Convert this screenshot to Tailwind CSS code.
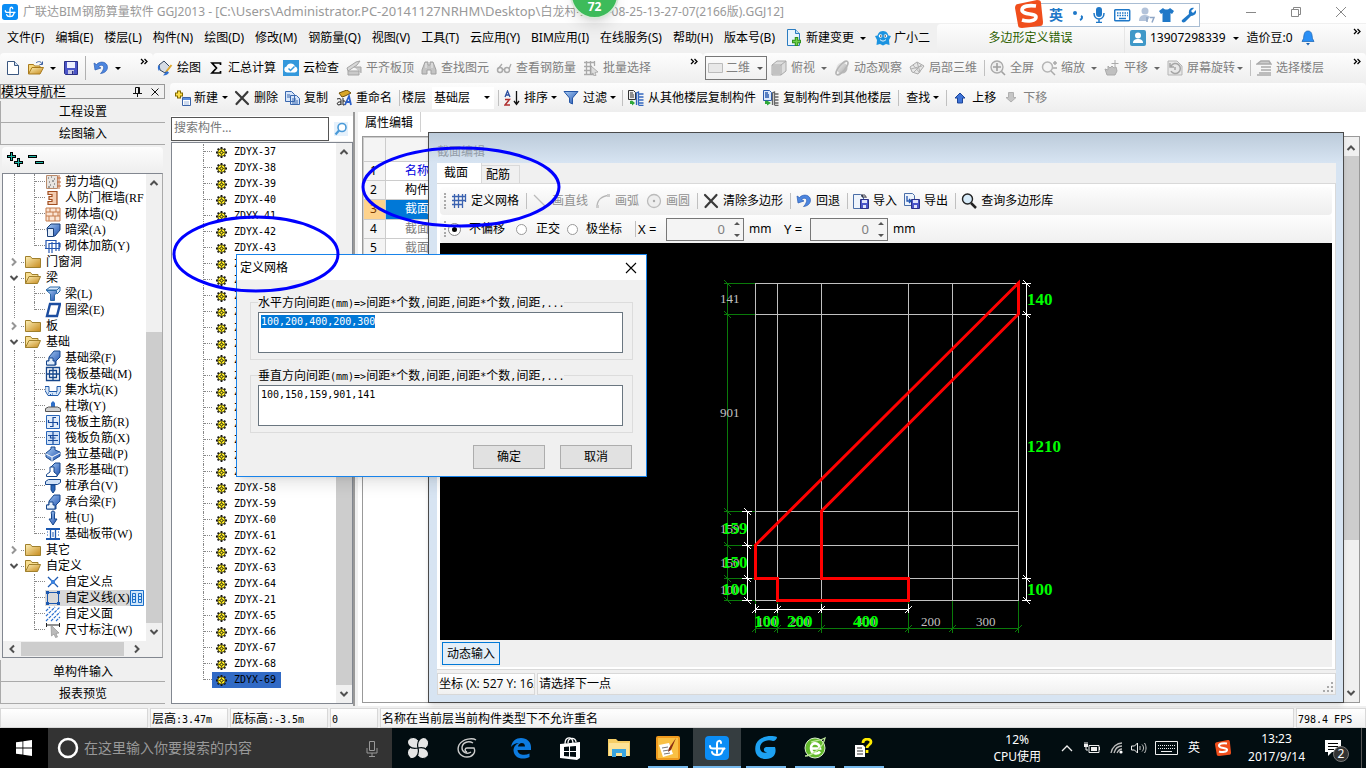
<!DOCTYPE html>
<html lang="zh-CN">
<head>
<meta charset="utf-8">
<title>广联达BIM钢筋算量软件 GGJ2013</title>
<script src="https://cdn.jsdelivr.net/npm/@tailwindcss/browser@4"></script>
</head>
<body class="relative flex h-screen flex-col overflow-hidden bg-[#f0f0f0] font-['Noto_Sans','Noto_Sans_CJK_SC',sans-serif] text-xs leading-4 whitespace-nowrap text-black">

<svg class="absolute size-0" aria-hidden="true">
  <defs>
    <linearGradient id="gy" x1="0" y1="0" x2="1" y2="1"><stop offset="0" stop-color="#fdf0b8"/><stop offset="1" stop-color="#c68a1c"/></linearGradient>
    <linearGradient id="gb" x1="0" y1="0" x2="1" y2="1"><stop offset="0" stop-color="#a9cdf5"/><stop offset="1" stop-color="#1d4fae"/></linearGradient>
    <linearGradient id="gg" x1="0" y1="0" x2="1" y2="1"><stop offset="0" stop-color="#f2f2f2"/><stop offset="1" stop-color="#a8a8a8"/></linearGradient>
  </defs>
  <symbol id="logo" viewBox="0 0 24 24"><rect width="24" height="24" rx="4" fill="#0b8df5"/><path d="M12 17V8c0-4 4-4 4-1M5 10c0 2 1 2.500 3 2.500h11M7 16c1 4 9 4 10 0 .5-2 1-3 2.500-3.500" fill="none" stroke="#fff" stroke-width="2" stroke-linecap="round"/></symbol>
  <symbol id="new" viewBox="0 0 16 16"><path d="M2.500 1.500h7l4 4v9h-11z" fill="#fff" stroke="#3b5780"/><path d="M9.500 1.500v4h4" fill="#cfe0f5" stroke="#3b5780"/></symbol>
  <symbol id="open" viewBox="0 0 16 16"><path d="M.5 14V4.500h5l1 1.500H12V8" fill="#f5d77f" stroke="#a97a1c"/><path d="M.5 14 4 7.500h11.500L12 14z" fill="url(#gy)" stroke="#a97a1c"/><path d="M8 3c2-2 5-2 6 1M14.500 1.500V4.500h-3" fill="none" stroke="#3b5fa0"/></symbol>
  <symbol id="save" viewBox="0 0 16 16"><path d="M1.500 1.500h13v13h-12l-1-1z" fill="#4b55c8" stroke="#2a2f86"/><path d="M4 2h8v6H4z" fill="#eef0ff"/><path d="M5 10h6v4H5z" fill="#c9cbe6"/><path d="M9 11h1.500v3H9z" fill="#2a2f86"/></symbol>
  <symbol id="undo" viewBox="0 0 16 16"><path d="M1 3l1 7 6-2-2.500-1.500C9 3.500 12 6 10 10c-.5 1.500-1.500 2.500-2.500 3.500C13 13 15.500 9 14 5 12 1.500 7 1 3.500 4.500z" fill="#4c86e0" stroke="#2b5cb0" stroke-width=".7"/></symbol>
  <symbol id="paint" viewBox="0 0 16 16"><path d="M2 5l5-4 6 6-5 6-5-3z" fill="#d5dbe4" stroke="#33455f"/><path d="M2 5c-2 1-1 5 0 6 1-2 1-3 1-4" fill="#2f6fd0"/><path d="M14.500 5L9 12" stroke="#e0a92e" stroke-width="2"/><path d="M10 11l-4 4.500c3 0 5-1 6-3z" fill="#2f6fd0"/></symbol>
  <symbol id="sigma" viewBox="0 0 16 16"><path d="M12.500 5V3H4l4.500 5L4 13h8.500v-2" fill="none" stroke="#000" stroke-width="1.700"/></symbol>
  <symbol id="cloud" viewBox="0 0 16 16"><path d="M0 0h16v16H0z" fill="#3398dc"/><path d="M4 12.500a3 3 0 0 1-.5-5.900 4.500 4.500 0 0 1 8.500 0A3 3 0 0 1 12 12.500z" fill="#fff"/><path d="M5.500 8.500l2 2 4-4" stroke="#3398dc" stroke-width="1.500" fill="none"/></symbol>
  <symbol id="slab" viewBox="0 0 16 16"><path d="M1 8l9-6 4-1-3 4-9 6z" fill="#d8d8d8" stroke="#a5a5a5"/><path d="M2 11h11v4H2zM8 7h7v6" fill="#c9c9c9" stroke="#a5a5a5"/></symbol>
  <symbol id="bino" viewBox="0 0 16 16"><path d="M4 2h3v3h2V2h3l3 8v4h-5v-4H6v4H1v-4z" fill="#c4c4c4" stroke="#a0a0a0"/><path d="M5 3v5M11 3v5" stroke="#eee"/></symbol>
  <symbol id="glasses" viewBox="0 0 16 16"><circle cx="4" cy="10" r="2.500" fill="none" stroke="#aaa" stroke-width="1.500"/><circle cx="11" cy="10" r="2.500" fill="none" stroke="#aaa" stroke-width="1.500"/><path d="M2 9l4-5M13 9l2-5M6.500 9.500h2" stroke="#aaa" stroke-width="1.300"/></symbol>
  <symbol id="batch" viewBox="0 0 16 16"><path d="M1 2.500h11M1 6.500h8M1 10.500h7M1 14.500h9M3.500 1v14M7.500 1v14M11.500 1v5" stroke="#aaa" stroke-width="1.300"/><path d="M8 6l7 6-3 .5 1 3-2 .5-1-3-2 1.500z" fill="#ddd" stroke="#999" stroke-width=".7"/></symbol>
  <symbol id="cube" viewBox="0 0 16 16"><path d="M1 5l5-4h9v10l-5 4H1z" fill="#ddd" stroke="#aaa"/><path d="M1 5h9v10M10 5l5-4" fill="none" stroke="#aaa"/><path d="M2 6h7v8H2z" fill="#c2c2c2"/></symbol>
  <symbol id="orbit" viewBox="0 0 16 16"><circle cx="8" cy="8" r="5.500" fill="url(#gg)"/><ellipse cx="8" cy="8" rx="8.500" ry="3" transform="rotate(-50 8 8)" fill="none" stroke="#b5b5b5" stroke-width="1.500"/></symbol>
  <symbol id="part3d" viewBox="0 0 16 16"><path d="M1 7l7-5 7 4-6 8-6-2z" fill="#e6e6e6" stroke="#aaa"/><path d="M4 5l7 8M8 2l3 10M2 9l11-3M5 12l8-8" stroke="#b0b0b0"/></symbol>
  <symbol id="full" viewBox="0 0 16 16"><circle cx="7" cy="7" r="6" fill="#eee" stroke="#aaa" stroke-width="1.300"/><path d="M3 7h8M7 3v8M11.500 11.500L15 15" stroke="#a0a0a0" stroke-width="1.600"/></symbol>
  <symbol id="zoomi" viewBox="0 0 16 16"><circle cx="6.500" cy="7" r="5" fill="#f5f5f5" stroke="#b5b5b5" stroke-width="1.500"/><path d="M10 11l4 4M12 3h4M14 1v4M12 8h4" stroke="#aaa" stroke-width="1.500"/></symbol>
  <symbol id="pan" viewBox="0 0 16 16"><path d="M3 15l-2-6 3 1V6l2 2 2-2 2 2 2-1 1 4-2 4z" fill="#c0c0c0" stroke="#aaa"/><path d="M11 0v7M7.500 3.500h7" stroke="#aaa"/></symbol>
  <symbol id="rotate" viewBox="0 0 16 16"><path d="M1 1h9l5 5v9H1z" fill="#e8e8e8" stroke="#b5b5b5"/><path d="M4 6a5 5 0 1 1 0 5M3 3v4h4M8 7v3" fill="none" stroke="#a5a5a5" stroke-width="1.500"/></symbol>
  <symbol id="floors" viewBox="0 0 16 16"><path d="M1 4l4-3h8l2 3zM5 7h10M5 10h10M3 13h12M1 15h14" fill="#ccc" stroke="#aaa" stroke-width="1.500"/></symbol>
  <symbol id="create" viewBox="0 0 16 16"><path d="M4 .5v8M0 4.500h8" stroke="#806800" stroke-width="4"/><path d="M4 1.500v6M1 4.500h6" stroke="#ffe04a" stroke-width="2"/><path d="M7.500 7.500h8v8h-8z" fill="#fff" stroke="#3c64a8"/><path d="M8 8h7v2H8z" fill="#5b8fe0"/><path d="M9 12h5M9 14h5" stroke="#9db6dd"/></symbol>
  <symbol id="del" viewBox="0 0 16 16"><path d="M2 2l12 12M13.500 2L2.500 14" stroke="#3a3a3a" stroke-width="2.200" stroke-linecap="round"/></symbol>
  <symbol id="copy" viewBox="0 0 16 16"><path d="M1.500 1.500h6l3 3v7h-9zM6.500 5.500h6l3 3v6h-9z" fill="#d6e5fa" stroke="#3a68ae"/><path d="M3 5h3M3 7h3M8 9h4M8 11h6M8 13h6" stroke="#3a68ae"/></symbol>
  <symbol id="rename" viewBox="0 0 16 16"><path d="M3 3l8-3 4 3-6 3-3 1z" fill="#d9a628" stroke="#705008"/><path d="M1 9c3-1 4 0 4 1v5M5 12c-4-1-5 3-2 3l2-1M7 8v7c4 0 3-5 0-4" fill="none" stroke="#222"/><path d="M9 15l4-9 2 9M10.500 12h4" fill="none" stroke="#2c60c8" stroke-width="1.800"/></symbol>
  <symbol id="sort" viewBox="0 0 16 16"><path d="M1 7l2.500-6L6 7M2 5h3" fill="none" stroke="#2c4fa0" stroke-width="1.300"/><path d="M1 9.500h4.500L1 15h5" fill="none" stroke="#b03030" stroke-width="1.400"/><path d="M12.500 1v13M10 11l2.500 3.500L15 11" fill="none" stroke="#111" stroke-width="1.300"/></symbol>
  <symbol id="filter" viewBox="0 0 16 16"><path d="M1 1.500h14L9.500 8v6l-3-1.500V8z" fill="url(#gb)" stroke="#2556a5"/></symbol>
  <symbol id="cfrom" viewBox="0 0 16 16"><path d="M.5.5h5l2 2v7h-7z" fill="#eee" stroke="#333"/><path d="M2 3h3M2 5h4M2 7h4" stroke="#333"/><path d="M8.500 15V3l2-1v13M10.500 4h5M10.500 7h5M10.500 10h5M10.500 13h5M10.500 15.500h5" fill="none" stroke="#3468c0" stroke-width="1.300"/><path d="M2 11v3h2v1.500l3-2.500-3-2.500" fill="#2fa83a"/></symbol>
  <symbol id="cto" viewBox="0 0 16 16"><path d="M.5.5h6l2 2v8h-8z" fill="#dce9fb" stroke="#2c5cb0"/><path d="M2 3h3M2 5h4M2 7h4" stroke="#2c5cb0" stroke-width="1.400"/><path d="M9.500 15V3l2-1v13M11.500 4h4M11.500 7h4M11.500 10h4M11.500 13h4M11.500 15.500h4" fill="none" stroke="#666" stroke-width="1.300"/><path d="M2 11v3h2v1.500l4-2.500-4-2.500" fill="#2fa83a"/></symbol>
  <symbol id="up" viewBox="0 0 16 16"><path d="M8 3l5 5h-2.500v5h-5V8H3z" fill="#3f74d8" stroke="#1d4598"/></symbol>
  <symbol id="down" viewBox="0 0 16 16"><path d="M8 12L3 7.500h2.500v-5h5v5H13z" fill="#c5c5c5" stroke="#b0b0b0"/></symbol>
  <symbol id="docplus" viewBox="0 0 16 18"><path d="M1.500.5h8l4 4v12h-12z" fill="#e9f4fd" stroke="#2b7cc0"/><path d="M9.500.5v4h4" fill="#bfe0f7" stroke="#2b7cc0"/><path d="M10.500 8v9M6 12.500h9" stroke="#2f8f1c" stroke-width="3.500"/><path d="M10.500 9v7M7 12.500h7" stroke="#6ed04a" stroke-width="1.500"/></symbol>
  <symbol id="mascot" viewBox="0 0 16 16"><path d="M8 1c4 0 5 3 5.500 4.500L16 6l-2 4 .5 5L11 14l-3 1.500L5 14l-3.500 1 .5-5L0 6l2.500-.5C3 4 4 1 8 1z" fill="#1b93e0"/><circle cx="5.500" cy="6" r="1.800" fill="#fff"/><circle cx="10.500" cy="6" r="1.800" fill="#fff"/><circle cx="5.800" cy="6" r=".8" fill="#123"/><circle cx="10.200" cy="6" r=".8" fill="#123"/><path d="M5 9.500c2 2 4 2 6 0" stroke="#fff" fill="none"/></symbol>
  <symbol id="user" viewBox="0 0 16 16"><rect width="16" height="16" rx="2" fill="#3f98c8"/><circle cx="8" cy="5.500" r="3" fill="#fff"/><path d="M3 13c0-3 2-4 5-4s5 1 5 4z" fill="#fff"/></symbol>
  <symbol id="bell" viewBox="0 0 14 16"><path d="M7 1c4 0 4 4 4.500 7.500l1.500 3H1l1.500-3C3 5 3 1 7 1z" fill="#2a8ff5" stroke="#1660b0" stroke-width=".7"/><path d="M5 13h4l-2 2.500z" fill="#1660b0"/></symbol>
  <symbol id="chev" viewBox="0 0 8 8"><path d="M1 1l2.500 2.500L1 6M4.500 1L7 3.500 4.500 6" fill="none" stroke="#000" stroke-width="1.300"/></symbol>
  <symbol id="mag" viewBox="0 0 16 16"><path d="M1 1h14v14H1z" fill="#e6f1fb"/><circle cx="9" cy="6.500" r="4" fill="#fff" stroke="#4a9ad8" stroke-width="1.600"/><path d="M6 9.500L2.500 13.500" stroke="#4a9ad8" stroke-width="2.200"/></symbol>
  <symbol id="mag2" viewBox="0 0 16 16"><circle cx="6.500" cy="6" r="5" fill="#d6eaf8" stroke="#222" stroke-width="1.400"/><path d="M10 10l5 5" stroke="#222" stroke-width="2.500"/></symbol>
  <symbol id="gridi" viewBox="0 0 16 16"><path d="M1 3.500h14M1 7.500h14M1 11.500h11M3.500 1v14M7.500 1v14M11.500 1v14M14.500 1v8" stroke="#3a62b0" stroke-width="1.300"/></symbol>
  <symbol id="line" viewBox="0 0 16 16"><path d="M2 2l12 12" stroke="#bbb" stroke-width="1.300"/></symbol>
  <symbol id="arc" viewBox="0 0 16 16"><path d="M2 14C2 7 7 3 14 2.500" fill="none" stroke="#b5b5b5" stroke-width="1.300"/><path d="M1 12h3v3H1zM12 1h3v3h-3z" fill="#ccc"/></symbol>
  <symbol id="circ" viewBox="0 0 16 16"><circle cx="8" cy="8" r="6.500" fill="#eee" stroke="#bbb" stroke-width="1.300"/><circle cx="8" cy="8" r="1.200" fill="#aaa"/></symbol>
  <symbol id="imp" viewBox="0 0 16 16"><path d="M.5 1.500h7l3 3v11H.5z" fill="#eef4fc" stroke="#4a6ea8"/><path d="M7.500 6.500h8v9h-8z" fill="#4b55c8" stroke="#2a2f86"/><path d="M9 7h5v3H9zM10 12h3v3h-3z" fill="#e0e3fa"/><path d="M9 3c2-2 4-1 4 2M9 1v3h3" fill="none" stroke="#223"/></symbol>
  <symbol id="exp" viewBox="0 0 16 16"><path d="M.5.500h8l2 2v10H.5z" fill="#eef4fc" stroke="#4a6ea8"/><path d="M7.500 6.500h8v9h-8z" fill="#4b55c8" stroke="#2a2f86"/><path d="M9 7h5v3H9zM10 12h3v3h-3z" fill="#e0e3fa"/><path d="M3 3v5h4M5 6l2 2-2 2" fill="none" stroke="#2255b0" stroke-width="1.300"/></symbol>

  <symbol id="fc" viewBox="0 0 16 14"><path d="M.5 12.500v-11h5l1.500 2h8.500v9z" fill="url(#gy)" stroke="#a0802c"/></symbol>
  <symbol id="fo" viewBox="0 0 16 14"><path d="M.5 12.500v-11h5l1.500 2h6v2" fill="#f7dd90" stroke="#a0802c"/><path d="M.5 12.500L4 5.500h11.500l-3 7z" fill="url(#gy)" stroke="#a0802c"/></symbol>
  <symbol id="t-wall" viewBox="0 0 16 16"><path d="M1.500 1.500h11v13h-11z" fill="#e8e4e0" stroke="#b98a6a"/><path d="M3 4h1M6 3h1M9 5h1M4 8h1M7 7h2M5 11h1M9 10h1M3 13h2M8 13h1" stroke="#555"/><path d="M14 1v14M12 4h4M12 8h4M12 12h4" stroke="#c06a3a"/></symbol>
  <symbol id="t-air" viewBox="0 0 16 16"><path d="M3 1.500h9v13H3v-3h4v-2H4v-3h3v-2H3z" fill="#f3ccb0" stroke="#a14e20" stroke-width="1.200"/></symbol>
  <symbol id="t-brick" viewBox="0 0 16 16"><path d="M1 2h14v13H1z" fill="#fbe6d6" stroke="#c47a4a"/><path d="M1 6h14M1 10h14M5 2v4M11 2v4M8 6v4M13 6v4M4 10v5M10 10v5" stroke="#c47a4a"/></symbol>
  <symbol id="t-box" viewBox="0 0 16 16"><path d="M2 6l4-4h9v6l-5 6-7 0z" fill="url(#gb)" stroke="#1b3f78"/><path d="M2.500 6.500h6v8h-6z" fill="#e2edfa" stroke="#1b3f78"/></symbol>
  <symbol id="t-rebar" viewBox="0 0 16 16"><path d="M1 2.500h10v8H1zM4 5.500h11v4M4 5v10M7 4v11M11 2v11M0 10.500h15M14 4v9" fill="none" stroke="#2556b0" stroke-width="1.200"/></symbol>
  <symbol id="t-beam" viewBox="0 0 16 16"><path d="M1 4l4-3h10l-3 3zM12 4l3-3v4l-3 3" fill="#d9e9fa" stroke="#2c6aa8"/><path d="M1.500 4.500h10v3l-2 1v6h-4V8z" fill="url(#gb)" stroke="#2c6aa8"/></symbol>
  <symbol id="t-ring" viewBox="0 0 16 16"><path d="M5 2h10l-3 12H2z" fill="#fff" stroke="#1c4da0" stroke-width="2.400"/></symbol>
  <symbol id="t-found" viewBox="0 0 16 16"><path d="M1.500 15v-4H4V7l5-6h6v6l-4 4v4z" fill="url(#gb)" stroke="#17478c"/><path d="M4 8h4v3h2v4H1.500v-4H4z" fill="#e4effb" stroke="#17478c"/></symbol>
  <symbol id="t-raft" viewBox="0 0 16 16"><path d="M1.500 1.500h13v13h-13zM4.500 4.500h7v7h-7zM1 8h14M8 1v14" fill="none" stroke="#17478c" stroke-width="1.300"/></symbol>
  <symbol id="t-pit" viewBox="0 0 16 16"><path d="M0 4.500h4v5h8v-5h4v4l-3 5H3l-3-5z" fill="#d6e6f8" stroke="#2059a8"/><path d="M3 11h1M7 12h1M11 11h1M5 12.500h1" stroke="#2059a8"/></symbol>
  <symbol id="t-pier" viewBox="0 0 16 16"><path d="M6 10V5l2-2 2 2v5z" fill="#2f6fc8"/><path d="M.5 13.500v-3l3-1.500h9l3 1.500v3z" fill="#d0d0d0" stroke="#555"/></symbol>
  <symbol id="t-main" viewBox="0 0 16 16"><path d="M1.500 1.500h13v13h-13z" fill="#e3eefb" stroke="#2a66b8"/><path d="M3 8.500h10M8 3v10M8 3.500h3M5 12.500h3M3.500 6v3M12.500 8v3" stroke="#174a9c" fill="none" stroke-width="1.200"/></symbol>
  <symbol id="t-neg" viewBox="0 0 16 16"><path d="M1.500 1.500h13v13h-13z" fill="#cfe1f7" stroke="#2a66b8"/><path d="M3 5.500h10M3 10.500h10M8 2v12M5.500 5v3h5" stroke="#174a9c" fill="none" stroke-width="1.200"/></symbol>
  <symbol id="t-ind" viewBox="0 0 16 16"><path d="M1 7l5-4v-2h4v3l5 2v4l-8 5-6-4z" fill="url(#gb)" stroke="#17478c"/><path d="M1 8l6 3 8-4M7 11v4" stroke="#fff" fill="none"/></symbol>
  <symbol id="t-strip" viewBox="0 0 16 16"><path d="M5 6l5-5h5v9l-3 4z" fill="url(#gb)" stroke="#17478c"/><path d="M1.500 14.500v-2L5 10V5h4v5l3 2.500v2z" fill="#fff" stroke="#17478c"/></symbol>
  <symbol id="t-cap" viewBox="0 0 16 16"><path d="M.5 6.500v-3l3-2h12v3l-3 2z" fill="#cfe1f7" stroke="#17478c"/><path d="M6 7h4v5l-2 3-2-3z" fill="#2a66b8" stroke="#17478c"/></symbol>
  <symbol id="t-pile" viewBox="0 0 16 16"><path d="M8 1c2 0 2 2 1.500 3v5H12l-4 6-4-6h2.500V4C6 3 6 1 8 1z" fill="url(#gb)" stroke="#17478c"/></symbol>
  <symbol id="t-band" viewBox="0 0 16 16"><path d="M1 3h14M1 13h14" stroke="#1c58b0" stroke-width="2"/><path d="M5.500 3v10M10.500 3v10" stroke="#1c58b0" stroke-width="1.300"/><path d="M2 6h1M2 9h1M13 6h1M13 9h1M8 6v5" stroke="#1c58b0"/></symbol>
  <symbol id="t-pt" viewBox="0 0 16 16"><path d="M3 3l10 10M13 3L3 13" stroke="#1c58b0" stroke-width="1.300"/><path d="M6 6h4v4H6z" fill="#3d82dd"/></symbol>
  <symbol id="t-line" viewBox="0 0 16 16"><path d="M2.500 2.500h11v11h-11z" fill="none" stroke="#1c58b0"/><path d="M1 1h3v3H1zM12 1h3v3h-3zM1 12h3v3H1zM12 12h3v3h-3z" fill="#1c58b0"/></symbol>
  <symbol id="t-area" viewBox="0 0 16 16"><path d="M1 5l4-4M1 10L10 1M1 15L15 1M6 15l9-9M11 15l4-4" stroke="#2a6fd0" stroke-width="1.200" stroke-dasharray="3 1"/></symbol>
  <symbol id="t-dim" viewBox="0 0 16 16"><path d="M1.500 1v4M14.500 1v4M1 3h14" stroke="#222"/><path d="M6 3l8 8-3 .5 1.500 3.500-2 .5-1.500-3.500-2.500 2z" fill="#bbb" stroke="#888" stroke-width=".6"/></symbol>
  <symbol id="gear" viewBox="0 0 12 12"><path d="M6 0v12M0 6h12M1.800 1.800l8.400 8.400M10.200 1.800l-8.400 8.400" stroke="#111" stroke-width="2"/><circle cx="6" cy="6" r="4.200" fill="#ffee20" stroke="#111" stroke-width=".8"/><path d="M6 2.500v7M2.500 6h7" stroke="#222" stroke-width=".7"/><circle cx="6" cy="6" r="1.500" fill="#ffee20" stroke="#111" stroke-width=".8"/></symbol>
  <symbol id="su" viewBox="0 0 10 10"><path d="M1.500 7L5 3.500 8.500 7" fill="none" stroke="#505050" stroke-width="2"/></symbol>
  <symbol id="sd" viewBox="0 0 10 10"><path d="M1.500 3L5 6.500 8.500 3" fill="none" stroke="#505050" stroke-width="2"/></symbol>
  <symbol id="sogou" viewBox="0 0 28 28"><path d="M3 4L22 0c3 0 4 1 4 3l2 19c0 3-1 4-3 4L7 28c-3 0-4-1-4-3L0 8c0-2 1-4 3-4z" fill="#f04e1c"/><path d="M21 6C14 5 7 6 7 10c0 5 14 3 14 7 0 4-8 5-14 3" fill="none" stroke="#fff" stroke-width="3.600"/></symbol>
</svg>

<!-- title bar -->
<header class="flex h-[23px] shrink-0 items-center bg-white pl-[2px] text-[#999]">
  <svg class="size-4"><use href="#logo"/></svg>
  <h1 class="ml-[5px] grow">广联达BIM钢筋算量软件 GGJ2013 - [<span class="text-[13px]">C:\Users\Administrator.PC-20141127NRHM\Desktop\</span>白龙村-2017-08-25-13-27-07(2166版).GGJ12]</h1>
  <button aria-label="最小化" class="mr-[33px] w-[12px]"><svg class="h-3 w-3"><path d="M1 6.500h10" stroke="#888"/></svg></button>
  <button aria-label="还原" class="mr-[33px] w-[12px]"><svg class="h-3 w-3"><path d="M1.500 3.500h7v7h-7zM3.500 3.500v-2h7v7h-2" fill="none" stroke="#888"/></svg></button>
  <button aria-label="关闭" class="mr-[19px] w-[12px]"><svg class="h-3 w-3"><path d="M1 1l10 10M11 1L1 11" stroke="#888"/></svg></button>
</header>

<!-- menu bar -->
<nav class="flex h-[30px] shrink-0 items-center pl-[7px]">
  <div class="flex w-[930px] shrink-0 items-center gap-[11px]">
    <button>文件(F)</button><button>编辑(E)</button><button>楼层(L)</button><button>构件(N)</button><button>绘图(D)</button><button>修改(M)</button><button>钢筋量(Q)</button><button>视图(V)</button><button>工具(T)</button><button>云应用(Y)</button><button>BIM应用(I)</button><button>在线服务(S)</button><button>帮助(H)</button><button>版本号(B)</button>
    <button class="flex items-center"><svg class="mr-[4px] h-[18px] w-4"><use href="#docplus"/></svg>新建变更<svg class="ml-[6px] h-[3px] w-[6px]"><path d="M0 0h6L3 3z"/></svg></button>
    <button class="-ml-[2px] flex items-center gap-[3px]"><svg class="size-4"><use href="#mascot"/></svg>广小二</button>
  </div>
  <div class="flex h-[29px] w-[188px] shrink-0 items-center justify-center rounded-l border-r border-[#e6e6e6] bg-linear-to-b from-[#fdfdfd] to-[#eeeeee] text-[#2d5f00]">多边形定义错误</div>
  <div class="flex h-[29px] grow items-center bg-linear-to-b from-[#fdfdfd] to-[#eeeeee] pl-[5px]">
    <button class="flex items-center"><svg class="mr-1 size-4"><use href="#user"/></svg>13907298339<svg class="ml-[7px] h-[3px] w-[6px]"><path d="M0 0h6L3 3z"/></svg></button>
    <button class="ml-2">造价豆:0</button>
    <button aria-label="消息" class="ml-2"><svg class="h-4 w-[14px]"><use href="#bell"/></svg></button>
    <button aria-label="更多" class="mr-[5px] mb-3 ml-auto"><svg class="size-2"><use href="#chev"/></svg></button>
  </div>
</nav>

<!-- main toolbar -->
<div class="flex h-[30px] shrink-0 text-[#808080]">
  <div class="flex w-[153px] shrink-0 items-center rounded bg-linear-to-b from-[#fdfdfd] to-[#eeeeee] pl-[5px]">
    <button aria-label="新建工程"><svg class="size-4"><use href="#new"/></svg></button>
    <button aria-label="打开" class="ml-[7px] flex items-center"><svg class="size-4"><use href="#open"/></svg><svg class="ml-[6px] h-[3px] w-[6px]"><path d="M0 0h6L3 3z"/></svg></button>
    <button aria-label="保存" class="ml-[7px]"><svg class="size-4"><use href="#save"/></svg></button>
    <span class="ml-[6px] h-6 w-px bg-[#b0b0b0]"></span>
    <button aria-label="撤销" class="ml-[7px] flex items-center"><svg class="size-4"><use href="#undo"/></svg><svg class="ml-[6px] h-[3px] w-[6px]"><path d="M0 0h6L3 3z"/></svg></button>
    <button aria-label="更多" class="mr-[5px] mb-3 ml-auto"><svg class="size-2"><use href="#chev"/></svg></button>
  </div>
  <div class="flex w-[550px] shrink-0 items-center gap-[7px] rounded bg-linear-to-b from-[#fdfdfd] to-[#eeeeee] pl-1">
    <button class="flex items-center gap-1 text-black"><svg class="size-4"><use href="#paint"/></svg>绘图</button>
    <button class="flex items-center gap-1 text-black"><svg class="size-4"><use href="#sigma"/></svg>汇总计算</button>
    <button class="flex items-center gap-1 text-black"><svg class="size-4"><use href="#cloud"/></svg>云检查</button>
    <button class="flex items-center gap-1"><svg class="size-4"><use href="#slab"/></svg>平齐板顶</button>
    <button class="flex items-center gap-1"><svg class="size-4"><use href="#bino"/></svg>查找图元</button>
    <button class="flex items-center gap-1"><svg class="size-4"><use href="#glasses"/></svg>查看钢筋量</button>
    <button class="flex items-center gap-1"><svg class="size-4"><use href="#batch"/></svg>批量选择</button>
    <button aria-label="更多" class="mr-[5px] mb-3 ml-auto"><svg class="size-2"><use href="#chev"/></svg></button>
  </div>
  <div class="flex grow items-center gap-[7px] rounded bg-linear-to-b from-[#fdfdfd] to-[#eeeeee] pl-[2px]">
    <label class="relative -mr-[3px] flex items-center"><span class="sr-only">视图模式</span>
      <select class="h-[24px] w-[62px] appearance-none border border-[#777] bg-transparent pl-5"><option>二维</option></select>
      <svg class="absolute left-[3px] h-[10px] w-[15px]"><path d="M.5.500h14v9H.5z" fill="#e8e8e8" stroke="#bbb"/></svg>
      <svg class="absolute right-1 h-[3px] w-[6px]"><path d="M0 0h6L3 3z" fill="#555"/></svg>
    </label>
    <button class="flex items-center gap-1"><svg class="size-4"><use href="#cube"/></svg>俯视<svg class="ml-[2px] h-[3px] w-[6px]"><path d="M0 0h6L3 3z" fill="#666"/></svg></button>
    <button class="flex items-center gap-1"><svg class="size-4"><use href="#orbit"/></svg>动态观察</button>
    <button class="flex items-center gap-1"><svg class="size-4"><use href="#part3d"/></svg>局部三维</button>
    <span class="-mr-[2px] h-4 w-px bg-[#c0c0c0]"></span>
    <button class="flex items-center gap-1"><svg class="size-4"><use href="#full"/></svg>全屏</button>
    <button class="flex items-center gap-1"><svg class="size-4"><use href="#zoomi"/></svg>缩放<svg class="ml-[2px] h-[3px] w-[6px]"><path d="M0 0h6L3 3z" fill="#666"/></svg></button>
    <button class="flex items-center gap-1"><svg class="size-4"><use href="#pan"/></svg>平移<svg class="ml-[2px] h-[3px] w-[6px]"><path d="M0 0h6L3 3z" fill="#666"/></svg></button>
    <button class="flex items-center"><svg class="mr-1 size-4"><use href="#rotate"/></svg>屏幕旋转<svg class="ml-[2px] h-[3px] w-[6px]"><path d="M0 0h6L3 3z" fill="#666"/></svg></button>
    <span class="-mr-[2px] h-4 w-px bg-[#c0c0c0]"></span>
    <button class="flex items-center gap-1"><svg class="size-4"><use href="#floors"/></svg>选择楼层</button>
    <button aria-label="更多" class="mr-[5px] mb-3 ml-auto"><svg class="size-2"><use href="#chev"/></svg></button>
  </div>
</div>

<main class="flex min-h-0 grow">
  <!-- module navigator -->
  <aside class="flex w-[165px] shrink-0 flex-col pb-[2px]">
    <div class="mt-px flex h-[15px] shrink-0 items-center border border-[#999]">
      <h2 class="grow text-[13px] leading-[13px]">模块导航栏</h2>
      <button aria-label="固定" class="mr-2"><svg class="h-[10px] w-[9px]"><path d="M2.500 6V.5h4V6M5.500 1v5M0 6.500h9M4.500 7v3" fill="none" stroke="#111"/></svg></button>
      <button aria-label="关闭" class="mr-1"><svg class="size-[10px]"><path d="M1.500 1.500l7 7M8.500 1.500l-7 7" stroke="#111"/></svg></button>
    </div>
    <button class="mt-[2px] h-[22px] shrink-0 border-b border-l border-[#aaa] pt-px">工程设置</button>
    <button class="h-[22px] shrink-0 border-b border-l border-[#aaa] pt-px">绘图输入</button>
    <div class="mx-[2px] mt-[2px] flex h-[26px] shrink-0 items-center gap-1 rounded bg-linear-to-b from-[#fdfdfd] to-[#eeeeee] pl-[5px]">
      <button aria-label="全部展开"><svg class="size-4"><path d="M4.500 0v9M0 4.500h9M11.500 6v9M7 10.500h9" stroke="#000" stroke-width="3"/><path d="M4.500 1v7M1 4.500h7M11.500 7v7M8 10.500h7" stroke="#1fb5a5"/></svg></button>
      <button aria-label="全部折叠"><svg class="h-4 w-[18px]"><path d="M1 4.500h9M8 10.500h9" stroke="#000" stroke-width="3"/><path d="M2 4.500h7M9 10.500h7" stroke="#1fb5a5"/></svg></button>
    </div>
    <div class="mx-[2px] flex min-h-0 grow flex-col border border-[#828790] border-r-[#aaa] bg-white">
      <div class="flex min-h-0 grow">
        <ul id="tree" class="grow overflow-hidden font-['Liberation_Serif','Noto_Sans_CJK_SC',serif]"></ul>
        <div class="flex w-4 shrink-0 flex-col items-center bg-[#f0f0f0]"><svg class="mt-1 size-[10px]"><use href="#su"/></svg><div class="mt-[144px] w-4 grow bg-[#cdcdcd]"></div><svg class="my-1 size-[10px]"><use href="#sd"/></svg></div>
      </div>
      <div class="flex h-4 shrink-0 items-center bg-[#f0f0f0] pr-[20px] pl-1"><svg class="size-[10px] -rotate-90"><use href="#su"/></svg><div class="mx-1 h-[14px] grow bg-[#cdcdcd]"></div><svg class="ml-1 size-[10px] rotate-90"><use href="#su"/></svg></div>
    </div>
    <button class="mt-[2px] h-[22px] shrink-0 border-b border-l border-[#aaa] pt-[2px]">单构件输入</button>
    <button class="h-[22px] shrink-0 border-b border-l border-[#aaa] pt-[2px]">报表预览</button>
  </aside>

  <section class="ml-[5px] flex min-w-0 grow flex-col">
    <!-- component toolbar -->
    <div class="flex h-[29px] shrink-0 items-center rounded bg-linear-to-b from-[#fdfdfd] to-[#eeeeee] pl-[5px]">
      <button class="flex items-center"><svg class="mr-[3px] size-4"><use href="#create"/></svg>新建<svg class="ml-1 h-[3px] w-[6px]"><path d="M0 0h6L3 3z"/></svg></button>
      <button class="ml-[6px] flex items-center gap-1"><svg class="size-4"><use href="#del"/></svg>删除</button>
      <button class="ml-[6px] flex items-center gap-1"><svg class="size-4"><use href="#copy"/></svg>复制</button>
      <button class="ml-2 flex items-center gap-1"><svg class="size-4"><use href="#rename"/></svg>重命名</button>
      <span class="ml-[7px] h-4 w-px bg-[#c0c0c0]"></span>
      <label for="floor" class="ml-[2px]">楼层</label>
      <div class="relative ml-[6px] flex items-center"><select id="floor" class="h-[22px] w-[62px] appearance-none bg-white pl-[2px]"><option>基础层</option></select><svg class="absolute right-1 h-[3px] w-[6px]"><path d="M0 0h6L3 3z"/></svg></div>
      <span class="ml-1 h-4 w-px bg-[#c0c0c0]"></span>
      <button class="ml-[5px] flex items-center"><svg class="mr-1 size-4"><use href="#sort"/></svg>排序<svg class="ml-[3px] h-[3px] w-[6px]"><path d="M0 0h6L3 3z"/></svg></button>
      <button class="ml-[6px] flex items-center"><svg class="mr-1 size-4"><use href="#filter"/></svg>过滤<svg class="ml-[3px] h-[3px] w-[6px]"><path d="M0 0h6L3 3z"/></svg></button>
      <span class="ml-[6px] h-4 w-px bg-[#c0c0c0]"></span>
      <button class="ml-[5px] flex items-center gap-1"><svg class="size-4"><use href="#cfrom"/></svg>从其他楼层复制构件</button>
      <button class="ml-[7px] flex items-center gap-1"><svg class="size-4"><use href="#cto"/></svg>复制构件到其他楼层</button>
      <span class="ml-[7px] h-4 w-px bg-[#c0c0c0]"></span>
      <button class="ml-[7px] flex items-center">查找<svg class="ml-[3px] h-[3px] w-[6px]"><path d="M0 0h6L3 3z"/></svg></button>
      <span class="ml-[7px] h-4 w-px bg-[#c0c0c0]"></span>
      <button class="ml-[5px] flex items-center gap-1"><svg class="size-4"><use href="#up"/></svg>上移</button>
      <button class="ml-[7px] flex items-center gap-1 text-[#808080]"><svg class="size-4"><use href="#down"/></svg>下移</button>
    </div>
    <div class="flex min-h-0 grow">
      <!-- component list -->
      <div class="ml-px flex w-[184px] shrink-0 flex-col border-r-2 border-[#999] pb-[2px]">
        <div class="mt-[4px] flex h-[25px] shrink-0 items-center bg-white">
          <input aria-label="搜索构件" placeholder="搜索构件…" class="h-6 w-[158px] border border-[#555] bg-white px-[2px] pb-[3px] placeholder:text-[#777]">
          <button aria-label="搜索" class="ml-1"><svg class="size-4"><use href="#mag"/></svg></button>
        </div>
        <div class="mt-px flex min-h-0 grow border border-[#828790] bg-white">
          <ul id="parts" class="grow overflow-hidden pt-px font-['DejaVu_Sans_Mono',monospace] text-[10px]"></ul>
          <div class="flex w-4 shrink-0 flex-col items-center bg-[#f0f0f0]"><svg class="mt-1 size-[10px]"><use href="#su"/></svg><div class="mt-[143px] w-4 grow bg-[#cdcdcd]"></div><svg class="my-1 size-[10px]"><use href="#sd"/></svg></div>
        </div>
      </div>
      <!-- property editor -->
      <div class="ml-[3px] flex min-w-0 grow flex-col bg-white pb-[3px]">
        <div class="h-[20px] shrink-0"><button class="h-[20px] w-[63px] border-r border-[#d0d0d0] pt-px text-center">属性编辑</button></div>
        <div class="mt-1 mr-[6px] ml-1 flex min-h-0 grow border border-[#999]">
          <table class="h-[121px] w-[900px] shrink-0 table-fixed border-collapse text-left">
            <colgroup><col class="w-[22px]"><col></colgroup>
            <tr class="h-6 bg-[#f4f4f4]"><th class="border border-[#ccc]"></th><th class="border border-[#ccc]"></th></tr>
            <tr><td class="border border-[#ccc] bg-[#f4f4f4] pl-[6px]">1</td><td class="border border-[#ccc] pl-[19px] text-[#0000e0]">名称</td></tr>
            <tr><td class="border border-[#ccc] bg-[#f4f4f4] pl-[6px]">2</td><td class="border border-[#ccc] pl-[19px]">构件类型</td></tr>
            <tr><td class="border border-[#ccc] bg-[#fdd28c] pl-[6px] text-[#7a3a00]">3</td><td class="border border-[#ccc] bg-[#0078d7] pl-[19px] text-white">截面形状</td></tr>
            <tr><td class="border border-[#ccc] bg-[#f4f4f4] pl-[6px]">4</td><td class="border border-[#ccc] pl-[19px] text-[#808080]">截面宽度</td></tr>
            <tr><td class="border border-[#ccc] bg-[#f4f4f4] pl-[6px]">5</td><td class="border border-[#ccc] pl-[19px] text-[#808080]">截面高度</td></tr>
          </table>
          <div class="ml-auto flex w-[17px] shrink-0 flex-col items-center bg-[#f0f0f0]"><svg class="mt-[6px] size-[10px]"><use href="#su"/></svg><div class="mt-[3px] h-[384px] w-4 bg-[#cdcdcd]"></div><svg class="mt-auto mb-1 size-[10px]"><use href="#sd"/></svg></div>
        </div>
      </div>
    </div>
  </section>
</main>

<!-- status bar -->
<footer class="flex h-[22px] shrink-0 gap-[2px] pt-[2px] font-['Noto_Sans_CJK_SC',sans-serif] leading-[18px]">
  <div class="w-[148px] border border-[#d8d8d8] bg-linear-to-b from-white to-[#f0f0f0]"></div>
  <div class="w-[78px] border border-[#d8d8d8] bg-linear-to-b from-white to-[#f0f0f0] pl-px">层高<span class="font-['DejaVu_Sans_Mono'] text-[10px]">:3.47m</span></div>
  <div class="w-[98px] border border-[#d8d8d8] bg-linear-to-b from-white to-[#f0f0f0] pl-px">底标高<span class="font-['DejaVu_Sans_Mono'] text-[10px]">:-3.5m</span></div>
  <div class="w-[48px] border border-[#d8d8d8] bg-linear-to-b from-white to-[#f0f0f0] pl-px"><span class="font-['DejaVu_Sans_Mono'] text-[10px]">0</span></div>
  <div class="grow border border-[#d8d8d8] bg-linear-to-b from-white to-[#f0f0f0] pl-px">名称在当前层当前构件类型下不允许重名</div>
  <div class="w-[70px] border border-[#d8d8d8] bg-linear-to-b from-white to-[#f0f0f0] pl-px"><span class="font-['DejaVu_Sans_Mono'] text-[10px]">798.4 FPS</span></div>
</footer>

<!-- taskbar -->
<footer class="flex h-10 shrink-0 bg-[#020d11] text-white">
  <button aria-label="开始" class="flex w-12 shrink-0 items-center justify-center bg-black"><svg class="size-4" viewBox="0 0 16 16"><path d="M0 2.300L6.500 1.400v6.100H0zM7.300 1.300L16 0v7.500H7.300zM0 8.400h6.500v6.200L0 13.700zM7.300 8.400H16V16l-8.700-1.300z" fill="#fff"/></svg></button>
  <label class="flex w-[344px] shrink-0 items-center bg-[#333] pl-[9px]">
    <svg class="size-[22px]"><circle cx="11" cy="11" r="9" fill="none" stroke="#fff" stroke-width="2.500"/></svg>
    <input aria-label="搜索" placeholder="在这里输入你要搜索的内容" class="ml-[5px] w-[278px] bg-transparent text-sm placeholder:text-[#999]">
    <svg class="ml-[4px] h-[17px] w-3"><path d="M3.500 1.500h5v9h-5zM1 8v5h10V8M6 13v3M3 16.500h6" fill="none" stroke="#999"/></svg>
  </label>
  <div class="ml-[2px] flex shrink-0 items-stretch">
    <button aria-label="360" class="flex w-12 items-center justify-center"><svg class="size-6" viewBox="0 0 24 24"><path d="M12 12C4 14 0 8 2 4c3-4 9-3 10 0M12 12c-2-8 4-12 8-10 4 3 3 9 0 10M12 12c8-2 12 4 10 8-3 4-9 3-10 0M12 12c2 8-4 12-8 10-4-3-3-9 0-10" fill="#e6e6e6" stroke="#020d11" stroke-width="1.200"/></svg></button>
    <button aria-label="G" class="flex w-[49px] items-center justify-center"><svg class="size-5" viewBox="0 0 20 20"><path d="M19 2c-3-2-13-2-17 5-3 7 2 12 8 12s9-5 7-9H10c-2 0-3 3 0 4M16 5C11 2 5 5 5 10c0 4 5 7 9 4" fill="none" stroke="#ccc" stroke-width="1.400"/></svg></button>
    <button aria-label="Edge" class="flex w-[59px] items-center justify-center"><svg class="size-[22px]" viewBox="0 0 22 22"><path d="M1 10C2 4 6 1 11 1c6 0 10 4 10 9v3H7.500c.5 5 7 6 12 3.500V20C12 23.500 4 21 3.500 13.500 3.500 10 6 7 9 6 5.500 6 3 7.500 1 10zM8 9.500h7C15 4.500 8.500 5 8 9.500z" fill="#0d7be0"/></svg></button>
    <button aria-label="应用商店" class="flex w-10 items-center justify-center"><svg class="h-6 w-[22px]" viewBox="0 0 22 24"><path d="M1 8l20-2v16l-3 2-17-2z" fill="#fff"/><path d="M6 8c0-8 8-8 8-1M9 7c0-6 8-6 8-1" fill="none" stroke="#fff" stroke-width="1.300"/><path d="M5 11l5-.5v4.500H5zM11 10.400l6-.4v5h-6zM5 16h5v4.500L5 20zM11 16h6v5l-6-.4z" fill="#020d11"/></svg></button>
    <button aria-label="文件资源管理器" class="flex w-[58px] items-center justify-center"><svg class="h-5 w-[22px]" viewBox="0 0 22 20"><path d="M0 1h8l2 2h12v15H0z" fill="#f5cd65"/><path d="M1 5h20v13H1z" fill="#fde397"/><path d="M4 19v-8h14v8h-4v-4H8v4z" fill="#3aa5e0"/></svg></button>
    <button aria-label="记事" class="flex w-10 items-center justify-center border-b-2 border-[#76b9ed] pt-[2px]"><svg class="size-6" viewBox="0 0 24 24"><rect width="24" height="24" rx="2" fill="#ef9a1e"/><rect x="2" y="2" width="20" height="20" fill="#f9c044"/><path d="M3 9l10-2 4 11-10 3z" fill="#fff"/><path d="M6 12l6-1M7 15l6-1M8 18l6-1" stroke="#777"/><path d="M20 2l-7 10-1 4 3-2z" fill="#8a2d12"/></svg></button>
    <button aria-label="广联达算量" class="ml-[5px] flex w-12 items-center justify-center border-b-2 border-[#76b9ed] bg-[#353d40] pt-[2px]"><svg class="size-6"><use href="#logo"/></svg></button>
    <button aria-label="广联达" class="ml-[5px] flex w-10 items-center justify-center border-b-2 border-[#76b9ed] pt-[2px]"><svg class="size-6" viewBox="0 0 24 24"><path d="M23 1C17-1 5 0 2 8c-3 10 3 15 10 15 8 0 11-6 9-12h-9c-3 1-3 5 1 5-2 2-7 0-7-4 0-7 8-9 13-7 2 0 4-2 4-4z" fill="#1da1f2"/></svg></button>
    <button aria-label="浏览器" class="ml-[9px] flex w-10 items-center justify-center border-b-2 border-[#76b9ed] pt-[2px]"><svg class="size-6" viewBox="0 0 24 24"><circle cx="12" cy="12" r="10" fill="#63b92c" stroke="#d9efcc"/><path d="M17 15.500c-2 3-9 3-9-3.500s8-6 9 .5H8" fill="none" stroke="#fff" stroke-width="2.600"/><path d="M2 20C7 20 20 13 22 2c-5 3-9 2-14 4" fill="none" stroke="#bfe99c" stroke-width="1.300"/></svg></button>
    <button aria-label="帮助" class="ml-[9px] flex w-10 items-center justify-center border-b-2 border-[#76b9ed] pt-[2px]"><svg class="size-5" viewBox="0 0 20 20"><path d="M1 7h8l2 2v10H1z" fill="#fff"/><path d="M3 10h5M3 13h6M3 16h6" stroke="#333"/><path d="M9 5c0-5 8-5 8-1 0 3-4 3-4 6M13 12v3" fill="none" stroke="#ffeb00" stroke-width="2.800"/></svg></button>
  </div>
  <div class="ml-auto flex shrink-0 items-center">
    <p class="mr-[20px] text-center leading-[17px]">12%<br>CPU使用</p>
    <svg class="mr-[11px] h-2 w-[12px]"><path d="M1 7l5-5 5 5" fill="none" stroke="#eee" stroke-width="1.300"/></svg>
    <svg class="mr-[10px] h-3 w-4"><path d="M5 3.500h10v7H5z" fill="none" stroke="#eee"/><path d="M7 5h6v4H7zM0 2h4v3H0zM15 5h1v3h-1z" fill="#eee"/><path d="M1 0v2M3 0v2M2 5v3h2" stroke="#eee" fill="none"/></svg>
    <svg class="mr-2 h-3 w-[13px]"><path d="M1 11C2 5 7 1 12 1M4 11c1-4 4-7 8-7M7 11c1-2 3-4 5-4" fill="none" stroke="#bbb" stroke-width="1.300"/><circle cx="11" cy="10" r="1.600" fill="#fff"/></svg>
    <svg class="mr-2 h-3 w-4"><path d="M.5 4v4h3l3 3V1l-3 3z" fill="none" stroke="#eee"/><path d="M9 4v4M11 2.500c2 2 2 5 0 7M13.500 1c2 3 2 7 0 10" fill="none" stroke="#ccc"/></svg>
    <svg class="mr-[10px] h-[14px] w-[23px]"><path d="M.5.500h22v13H.5z" fill="none" stroke="#eee"/><path d="M3 4.500h17M3 7.500h17" stroke="#eee" stroke-dasharray="1 1"/><path d="M6 10.500h11" stroke="#eee"/></svg>
    <span class="mr-[15px]">英</span>
    <svg class="mr-[17px] size-4"><use href="#sogou"/></svg>
    <p class="text-center leading-[18px]">13:23<br>2017/9/14</p>
    <button aria-label="通知" class="relative ml-[20px] flex h-10 w-[30px] items-center"><svg class="h-[18px] w-4"><path d="M0 1h16v12H7l-4 4v-4H0z" fill="#fff"/><path d="M3 4.500h10M3 7.500h10M3 10.500h6" stroke="#000"/></svg><span class="absolute top-[18px] left-[8px] size-4 rounded-full border border-[#777] bg-[#333] text-center leading-[14px]">2</span></button>
    <span class="ml-[6px] h-10 w-[5px] border-l border-[#555]"></span>
  </div>
</footer>

<!-- section editor window -->
<section class="absolute top-[132px] right-[22px] bottom-[65px] left-[428px] flex flex-col border border-[#4a4a4a] bg-linear-to-b from-[#bccbda] from-0% to-[#d7e4f2] to-[30px] pr-[7px] pb-[7px] pl-2 shadow-md">
  <h2 class="h-[30px] shrink-0 pt-[11px] leading-4 text-[#939da8]">截面编辑</h2>
  <div class="flex min-h-0 grow flex-col bg-[#f0f0f0]">
    <div class="flex h-[20px] shrink-0 items-end">
      <button class="h-[20px] w-[45px] border-r border-[#d9d9d9] bg-white pr-[6px]">截面</button>
      <button class="h-[18px] w-[38px] border-t border-r border-[#d9d9d9] pr-[5px]">配筋</button>
    </div>
    <div class="flex min-h-0 grow flex-col border-t border-r border-b border-[#d9d9d9] bg-white px-[3px] pt-[3px] pb-[2px]">
      <div class="flex h-[28px] shrink-0 items-center rounded bg-linear-to-b from-[#fdfdfd] to-[#eeeeee] pl-1">
        <span class="h-4 w-[2px] border-l-2 border-dotted border-[#aaa]"></span>
        <button class="ml-[5px] flex items-center gap-1"><svg class="size-4"><use href="#gridi"/></svg>定义网格</button>
        <span class="ml-[7px] h-4 w-px bg-[#c0c0c0]"></span>
        <button class="ml-[5px] flex items-center gap-1 text-[#909090]"><svg class="size-4"><use href="#line"/></svg>画直线</button>
        <button class="ml-[7px] flex items-center gap-1 text-[#909090]"><svg class="size-4"><use href="#arc"/></svg>画弧</button>
        <button class="ml-[7px] flex items-center gap-1 text-[#909090]"><svg class="size-4"><use href="#circ"/></svg>画圆</button>
        <span class="ml-[7px] h-4 w-px bg-[#c0c0c0]"></span>
        <button class="ml-[5px] flex items-center gap-1"><svg class="size-4"><use href="#del"/></svg>清除多边形</button>
        <span class="ml-[7px] h-4 w-px bg-[#c0c0c0]"></span>
        <button class="ml-[5px] flex items-center gap-1"><svg class="size-4"><use href="#undo"/></svg>回退</button>
        <span class="ml-[7px] h-4 w-px bg-[#c0c0c0]"></span>
        <button class="ml-[5px] flex items-center gap-1"><svg class="size-4"><use href="#imp"/></svg>导入</button>
        <button class="ml-[7px] flex items-center gap-1"><svg class="size-4"><use href="#exp"/></svg>导出</button>
        <span class="ml-[7px] h-4 w-px bg-[#c0c0c0]"></span>
        <button class="ml-[5px] flex items-center gap-1"><svg class="size-4"><use href="#mag2"/></svg>查询多边形库</button>
      </div>
      <div class="flex h-[28px] shrink-0 items-center rounded bg-linear-to-b from-[#fdfdfd] to-[#f0f0f0] pl-1">
        <span class="h-4 w-[2px] border-l-2 border-dotted border-[#aaa]"></span>
        <label class="ml-[3px] flex items-center gap-[9px]"><input type="radio" name="offset" checked class="size-[11px] appearance-none rounded-full border border-[#888] bg-white checked:border-[3px] checked:border-white checked:bg-black checked:outline checked:outline-[#888]">不偏移</label>
        <label class="ml-[11px] flex items-center gap-[9px]"><input type="radio" name="offset" class="size-[11px] appearance-none rounded-full border border-[#999] bg-white">正交</label>
        <label class="ml-[7px] flex items-center gap-[8px]"><input type="radio" name="offset" class="size-[11px] appearance-none rounded-full border border-[#999] bg-white">极坐标</label>
        <span class="ml-[13px] h-4 w-px bg-[#c0c0c0]"></span>
        <label for="x" class="ml-[2px] w-[28px] text-[13px]">X =</label>
        <div class="relative"><input id="x" value="0" class="h-[23px] w-[78px] border border-[#777] bg-[#f4f4f4] pr-[18px] text-right text-[13px] text-[#808080]"><svg class="absolute top-1 right-1 h-4 w-[6px]"><path d="M0 3h6L3 0zM0 12h6l-3 3z" fill="#555"/></svg></div>
        <span class="ml-[5px] w-[35px]">mm</span>
        <label for="y" class="w-[26px] text-[13px]">Y =</label>
        <div class="relative"><input id="y" value="0" class="h-[23px] w-[78px] border border-[#777] bg-[#f4f4f4] pr-[18px] text-right text-[13px] text-[#808080]"><svg class="absolute top-1 right-1 h-4 w-[6px]"><path d="M0 3h6L3 0zM0 12h6l-3 3z" fill="#555"/></svg></div>
        <span class="ml-[5px]">mm</span>
      </div>
      <div class="min-h-0 grow bg-black">
        <svg class="size-full font-['Liberation_Serif',serif]" viewBox="440 243 892 397" preserveAspectRatio="xMidYMid meet">
          <g fill="none" stroke="#0a7a0a">
            <path d="M727.500 283v318M724 283.500h31M724 314.500h31M724 511.500h31M724 545.500h31M724 578.500h31M724 600.500h31"/>
            <path d="M755 628.500h264M755.500 601v32M777.500 601v32M821.500 601v32M908.500 601v32M952.500 601v32M1018.500 601v32"/>
            <path d="M724 280l7 7M724 311l7 7M724 508l7 7M724 542l7 7M724 575l7 7M724 597l7 7M752 632l7-7M774 632l7-7M818 632l7-7M905 632l7-7M949 632l7-7M1015 632l7-7"/>
          </g>
          <path d="M755.500 283v318M777.500 283v318M821.500 283v318M908.500 283v318M952.500 283v318M1018.500 283v318M755 283.500h264M755 314.500h264M755 511.500h264M755 545.500h264M755 578.500h264M755 600.500h264" fill="none" stroke="#c0c0c0"/>
          <g fill="none" stroke="#fff">
            <path d="M747.500 511v90M742 511.500h10M742 545.500h10M742 578.500h10M742 600.500h10M744 508l7 7M744 542l7 7M744 575l7 7M744 597l7 7"/>
            <path d="M755 609.500h154M755.500 604v9M777.500 604v9M821.500 604v9M908.500 604v9M752 613l7-7M774 613l7-7M818 613l7-7M905 613l7-7"/>
            <path d="M1026.500 283v318M1022 283.500h9M1022 314.500h9M1022 578.500h9M1022 600.500h9M1023 280l7 7M1023 311l7 7M1023 575l7 7M1023 597l7 7"/>
          </g>
          <g fill="#c0c0c0" font-size="13">
            <text x="720" y="303">141</text><text x="720" y="417">901</text><text x="720" y="533">159</text><text x="720" y="567">150</text><text x="720" y="594">100</text>
            <text x="757" y="626">100</text><text x="790" y="626">200</text><text x="856" y="626">400</text><text x="921" y="626">200</text><text x="976" y="626">300</text>
          </g>
          <g fill="#00ff00" font-size="17" font-weight="bold">
            <text x="722" y="534">159</text><text x="722" y="568">150</text><text x="722" y="595">100</text>
            <text x="754" y="627">100</text><text x="787" y="627">200</text><text x="853" y="627">400</text>
            <text x="1027" y="305">140</text><text x="1027" y="452">1210</text><text x="1027" y="595">100</text>
          </g>
          <path d="M755.500 545v33.500h22v22h131v-22h-87V511l197-197v-31z" fill="none" stroke="#ff0000" stroke-width="3"/>
        </svg>
      </div>
      <div class="h-[27px] shrink-0 bg-[#f0f0f0] pt-[2px] pl-[2px]"><button class="h-[23px] w-[58px] border border-[#0078d7] bg-[#e3eef8]">动态输入</button></div>
    </div>
    <div class="mt-[3px] flex h-[22px] shrink-0 gap-[2px] leading-5">
      <div class="w-[98px] overflow-hidden border border-[#d8d8d8] bg-linear-to-b from-white to-[#f0f0f0] pl-px font-['Open_Sans','Noto_Sans_CJK_SC',sans-serif]">坐标 (X: 527 Y: 162</div>
      <div class="relative grow border border-[#d8d8d8] bg-linear-to-b from-white to-[#f0f0f0] pl-px">请选择下一点<svg class="absolute right-px bottom-px size-3"><path d="M9 2h2M5 6h2M9 6h2M1 10h2M5 10h2M9 10h2" stroke="#aaa" stroke-width="2"/></svg></div>
    </div>
  </div>
</section>

<!-- grid definition dialog -->
<section role="dialog" aria-labelledby="dlg" class="absolute top-[254px] left-[236px] flex w-[411px] flex-col border border-[#1883ea] bg-[#f0f0f0] shadow-lg">
  <div class="flex h-[25px] items-center bg-white pl-[3px]"><h2 id="dlg" class="grow">定义网格</h2><button aria-label="关闭" class="mr-[9px]"><svg class="size-3"><path d="M1 1l10 10M11 1L1 11" stroke="#000" stroke-width="1.100"/></svg></button></div>
  <div class="flex flex-col gap-[7px] px-[13px] pt-[14px]">
    <fieldset class="h-[66px] min-w-0 border border-[#dcdcdc] px-[7px]">
      <legend class="h-4 font-['Noto_Sans_CJK_SC',sans-serif]"><label for="h">水平方向间距<span class="font-['DejaVu_Sans_Mono'] text-[10px]">(mm)=&gt;</span>间距<span class="font-['DejaVu_Sans_Mono'] text-[10px]">*</span>个数<span class="font-['DejaVu_Sans_Mono'] text-[10px]">,</span>间距<span class="font-['DejaVu_Sans_Mono'] text-[10px]">,</span>间距<span class="font-['DejaVu_Sans_Mono'] text-[10px]">*</span>个数<span class="font-['DejaVu_Sans_Mono'] text-[10px]">,</span>间距<span class="font-['DejaVu_Sans_Mono'] text-[10px]">,...</span></label></legend>
      <textarea id="h" class="mt-[2px] block h-[41px] w-[365px] resize-none border border-[#6a7680] bg-white px-[2px] pt-[2px] font-['DejaVu_Sans_Mono'] text-[10px] leading-[13px] outline-none selection:bg-[#0078d7] selection:text-white">100,200,400,200,300</textarea>
    </fieldset>
    <fieldset class="h-[66px] min-w-0 border border-[#dcdcdc] px-[7px]">
      <legend class="h-4 font-['Noto_Sans_CJK_SC',sans-serif]"><label for="v">垂直方向间距<span class="font-['DejaVu_Sans_Mono'] text-[10px]">(mm)=&gt;</span>间距<span class="font-['DejaVu_Sans_Mono'] text-[10px]">*</span>个数<span class="font-['DejaVu_Sans_Mono'] text-[10px]">,</span>间距<span class="font-['DejaVu_Sans_Mono'] text-[10px]">,</span>间距<span class="font-['DejaVu_Sans_Mono'] text-[10px]">*</span>个数<span class="font-['DejaVu_Sans_Mono'] text-[10px]">,</span>间距<span class="font-['DejaVu_Sans_Mono'] text-[10px]">,...</span></label></legend>
      <textarea id="v" class="mt-[2px] block h-[41px] w-[365px] resize-none border border-[#6a7680] bg-white px-[2px] pt-[2px] font-['DejaVu_Sans_Mono'] text-[10px] leading-[13px] outline-none">100,150,159,901,141</textarea>
    </fieldset>
  </div>
  <div class="mt-[12px] mr-[14px] mb-[7px] flex justify-end gap-[15px]">
    <button class="h-6 w-[72px] border border-[#adadad] bg-[#e1e1e1]">确定</button>
    <button class="h-6 w-[72px] border border-[#adadad] bg-[#e1e1e1]">取消</button>
  </div>
</section>

<!-- hand-drawn highlights -->
<svg class="pointer-events-none absolute top-0 left-0 h-[300px] w-[600px]"><g fill="none" stroke="#0000ff" stroke-width="3"><ellipse cx="461" cy="187" rx="98" ry="39"/><ellipse cx="256" cy="254" rx="82" ry="37"/></g></svg>

<!-- floating widgets -->
<div class="absolute -top-[30px] left-[570px] flex size-[49px] items-end justify-center rounded-full border-2 border-[#d8e8d8] bg-[#3dbb5a] pb-[2px] font-bold text-white shadow-lg">72</div>
<div class="absolute top-[3px] left-[1030px] flex h-6 w-[170px] items-center border border-[#a9bdd3] bg-white pl-[18px] text-[#1f78c8]">
  <svg class="absolute -top-1 -left-[16px] size-7"><use href="#sogou"/></svg>
  <span class="text-sm font-bold">英</span>
  <svg class="ml-[9px] h-4 w-[13px]"><circle cx="3" cy="6" r="2" fill="#1f78c8"/><path d="M9 9c2 1 1 3-1 4" fill="none" stroke="#1f78c8" stroke-width="2"/></svg>
  <svg class="ml-[7px] h-4 w-[14px]"><rect x="4" y="0" width="6" height="10" rx="3" fill="#1f78c8"/><path d="M2 6c0 8 10 8 10 0M7 12v3M4 15.500h6" fill="none" stroke="#1f78c8" stroke-width="1.500"/></svg>
  <svg class="ml-[8px] h-4 w-[17px]"><rect x=".7" y="2.700" width="15" height="11" rx="1" fill="none" stroke="#1f78c8" stroke-width="1.500"/><path d="M3 6h11M3 8.500h11" stroke="#1f78c8" stroke-width="1.500" stroke-dasharray="1.500 1"/><path d="M5 11.500h7" stroke="#1f78c8" stroke-width="1.500"/></svg>
  <svg class="ml-[8px] h-4 w-[16px]"><circle cx="6" cy="4" r="3.500" fill="#b3c3da"/><path d="M0 14c0-5 3-6 6-6s4 1 5 2l-3 4z" fill="#b3c3da"/><path d="M8 10v5M11 10.500h4l-2 5" stroke="#8fa6c6" fill="none" stroke-width="1.500"/></svg>
  <svg class="ml-[4px] h-4 w-[15px]"><path d="M0 4l4-3c2 2 5 2 7 0l4 3-2 3-1.500-1V15h-8V6L2 7z" fill="#1f78c8"/></svg>
  <svg class="ml-[7px] h-4 w-[15px]"><path d="M1 13l7-6C7 3 10 0 13 1l-3 3 2 2 3-3c1 4-2 6-5 6l-6 6c-2 1-4 0-3-2z" fill="#1f78c8"/></svg>
</div>

<script>
  const tree = [
    [2, 't-wall', '剪力墙(Q)'], [2, 't-air', '人防门框墙(RF'], [2, 't-brick', '砌体墙(Q)'], [2, 't-box', '暗梁(A)'], [2, 't-rebar', '砌体加筋(Y)'],
    [1, 'fc', '门窗洞'], [1, 'fo', '梁'], [2, 't-beam', '梁(L)'], [2, 't-ring', '圈梁(E)'], [1, 'fc', '板'], [1, 'fo', '基础'],
    [2, 't-found', '基础梁(F)'], [2, 't-raft', '筏板基础(M)'], [2, 't-pit', '集水坑(K)'], [2, 't-pier', '柱墩(Y)'], [2, 't-main', '筏板主筋(R)'],
    [2, 't-neg', '筏板负筋(X)'], [2, 't-ind', '独立基础(P)'], [2, 't-strip', '条形基础(T)'], [2, 't-cap', '桩承台(V)'], [2, 't-found', '承台梁(F)'],
    [2, 't-pile', '桩(U)'], [2, 't-band', '基础板带(W)'], [1, 'fc', '其它'], [1, 'fo', '自定义'], [2, 't-pt', '自定义点'],
    [2, 't-line', '自定义线(X)'], [2, 't-area', '自定义面'], [2, 't-dim', '尺寸标注(W)']
  ];
  const arrow = {
    fc: '<svg class="size-[10px] rotate-90 opacity-60"><use href="#su"/></svg>',
    fo: '<svg class="size-[10px]"><use href="#sd"/></svg>'
  };
  const lastRoot = tree.findLastIndex(([level]) => level === 1);
  document.getElementById('tree').innerHTML = tree.map(([level, icon, text], i) => {
    if (level === 1) return `<li class="flex h-4 items-center pl-[6px]">${arrow[icon]}<span class="ml-[2px] w-[3px] border-t border-dotted border-[#888]"></span><svg class="ml-[1px] h-[14px] w-4"><use href="#${icon}"/></svg><span class="ml-[5px]">${text}</span></li>`;
    const on = text === '自定义线(X)';
    const last = !tree[i + 1] || tree[i + 1][0] === 1;
    const trunk = i > lastRoot ? 'border-transparent' : 'border-[#888]';
    return `<li class="flex h-4 pl-[11px]"><span class="w-[20px] border-l border-dotted ${trunk}"></span><span class="${last ? 'h-2' : 'h-4'} border-l border-dotted border-[#888]"></span><span class="h-2 w-[10px] border-b border-dotted border-[#888]"></span><span class="flex h-4 items-center ${on ? 'bg-[#d9d9d9]' : ''}"><svg class="size-4"><use href="#${icon}"/></svg><span class="ml-[4px]">${text}</span></span>${on ? '<svg class="h-4 w-[14px]"><path d="M.5.500h13v15H.5z" fill="#cfe6fb" stroke="#1c6fc8"/><path d="M2.500 3.500h3v9h-3zM8.500 3.500h3v9h-3zM2 6.500h4M2 9.500h4M8 6.500h4M8 9.500h4" fill="none" stroke="#1c6fc8"/></svg>' : ''}</li>`;
  }).join('');

  const ids = [];
  for (let i = 37; i <= 64; i++) ids.push(i);
  ids.push(21, 65, 66, 67, 68, 69);
  document.getElementById('parts').innerHTML = ids.map((n) =>
    `<li class="flex h-4 pl-[31px]"><span class="${n === 69 ? 'h-2' : 'h-4'} shrink-0 border-l border-dotted border-[#888]"></span><span class="h-2 w-[8px] shrink-0 border-b border-dotted border-[#888]"></span><span class="flex h-4 w-[69px] items-center pl-1 ${n === 69 ? 'bg-[#316ac5]' : ''}"><svg class="mr-[7px] size-[11px] shrink-0"><use href="#gear"/></svg>ZDYX-${n}</span></li>`
  ).join('');

  const h = document.getElementById('h');
  h.focus();
  h.select();
</script>
</body>
</html>
